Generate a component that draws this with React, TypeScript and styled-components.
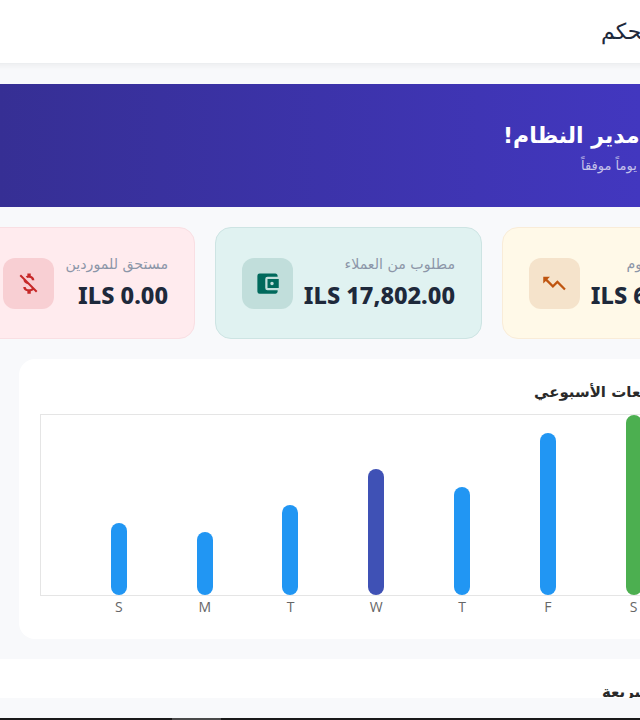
import React from 'react';
import styled, { createGlobalStyle } from 'styled-components';
import { MdAccountBalanceWallet, MdMoneyOff, MdTrendingUp } from 'react-icons/md';

const GlobalStyle = createGlobalStyle`
    html, body {
        margin: 0;
        padding: 0;
        overflow: hidden;
        background: #f8f9fb;
    }
    body {
        font-family: "DejaVu Sans", "Noto Sans", sans-serif;
    }
`;

const Viewport = styled.div`
    width: 640px;
    height: 720px;
    overflow: hidden;
    background: #f8f9fb;
`;

// the page is wider than the window, it runs off on both sides
const Page = styled.div`
    width: 1100px;
    margin-left: -72px;
    display: flex;
    flex-direction: column;
`;

const TopBar = styled.header`
    height: 64px;
    box-sizing: border-box;
    background: #fff;
    border-bottom: 1px solid #eceef0;
    box-shadow: 0 2px 6px rgba(0, 0, 0, 0.05);
    display: flex;
    align-items: center;
    padding-left: 673px;
`;

const PageTitle = styled.h1`
    margin: 0;
    font-size: 22px;
    font-weight: 500;
    color: #1e293b;
    white-space: nowrap;
`;

const Banner = styled.section`
    height: 123px;
    box-sizing: border-box;
    padding-top: 4px;
    margin-top: 20px;
    background: linear-gradient(90deg, #362f94 72px, #4237bf 712px);
    display: flex;
    flex-direction: column;
    justify-content: center;
    align-items: flex-start;
    gap: 10px;
`;

const BannerTitle = styled.h2`
    margin: 0 0 0 575px;
    font-size: 22px;
    font-weight: 700;
    color: #fff;
    white-space: nowrap;
`;

const BannerText = styled.p`
    margin: 0 0 0 653px;
    font-size: 13px;
    color: rgba(255, 255, 255, 0.7);
    white-space: nowrap;
`;

const Cards = styled.div`
    display: grid;
    grid-template-columns: repeat(3, 267px);
    column-gap: 20px;
    margin-top: 20px;
`;

const Card = styled.div<{ $bg: string; $line: string }>`
    height: 112px;
    box-sizing: border-box;
    border-radius: 16px;
    background: ${p => p.$bg};
    border: 1px solid ${p => p.$line};
    padding: 0 26px;
    display: flex;
    align-items: center;
    gap: 11px;
`;

const CardText = styled.div`
    display: flex;
    flex-direction: column;
    align-items: flex-start;
    gap: 7px;
    padding-bottom: 2px;
`;

const Label = styled.div`
    font-size: 14.2px;
    line-height: 18px;
    color: #8c96a8;
    white-space: nowrap;
`;

const Amount = styled.div`
    font-family: "Noto Sans", sans-serif;
    font-size: 23.5px;
    font-weight: 800;
    line-height: 30px;
    color: #1e293b;
    white-space: nowrap;
`;

const Tile = styled.div<{ $bg: string; $fg: string }>`
    width: 51px;
    height: 51px;
    flex: none;
    border-radius: 12px;
    background: ${p => p.$bg};
    color: ${p => p.$fg};
    display: flex;
    align-items: center;
    justify-content: center;
`;

const FlippedIcon = styled(MdTrendingUp)`
    transform: scaleX(-1);
`;

const ChartCard = styled.section`
    margin: 20px 0 0 91px;
    height: 280px;
    box-sizing: border-box;
    border-radius: 16px 0 0 16px;
    background: #fff;
    padding: 21px 0 0 21px;
    display: flex;
    flex-direction: column;
    align-items: flex-start;
`;

const ChartTitle = styled.h3`
    margin: 3px 0 0 494px;
    height: 31px;
    font-size: 15px;
    font-weight: 600;
    color: #2a2a2a;
    white-space: nowrap;
`;

const Plot = styled.div`
    height: 182px;
    width: 100%;
    box-sizing: border-box;
    border: 1px solid #e5e5e5;
    border-right: none;
    padding-left: 35px;
    display: flex;
    align-items: flex-end;
`;

const BarSlot = styled.div`
    width: 85.8px;
    flex: none;
    display: flex;
    justify-content: center;
`;

const Bar = styled.div<{ $color: string; $height: number }>`
    width: 16px;
    height: ${p => p.$height}px;
    border-radius: 8px;
    background: ${p => p.$color};
`;

const AxisRow = styled.div`
    padding-left: 36px;
    display: flex;
`;

const AxisLabel = styled.div`
    width: 85.8px;
    flex: none;
    text-align: center;
    font-family: "Open Sans", sans-serif;
    font-size: 14px;
    font-weight: 400;
    line-height: 22px;
    color: #666;
`;

const ActionsPanel = styled.section`
    margin-top: 20px;
    height: 39px;
    overflow: hidden;
    background: #fff;
    padding: 22px 0 0 674px;
    box-sizing: border-box;
    display: flex;
    align-items: flex-start;
`;

const ActionsTitle = styled.h3`
    margin: 0;
    font-size: 15px;
    font-weight: 600;
    line-height: 22px;
    color: #2a2a2a;
    white-space: nowrap;
`;

const ScrollTrack = styled.div`
    margin-top: 20px;
    height: 2px;
    padding-left: 244px;
    background: #1a1a1a;
`;

const ScrollThumb = styled.div`
    width: 49px;
    height: 2px;
    background: #4a4a4a;
`;

const days = [
    { name: 'S', value: 72, color: '#2196f3' },
    { name: 'M', value: 63, color: '#2196f3' },
    { name: 'T', value: 90, color: '#2196f3' },
    { name: 'W', value: 126, color: '#3f51b5' },
    { name: 'T', value: 108, color: '#2196f3' },
    { name: 'F', value: 162, color: '#2196f3' },
    { name: 'S', value: 180, color: '#4caf50' },
];

const App = () => (
    <Viewport>
        <GlobalStyle />
        <Page>
            <TopBar>
                <PageTitle dir="rtl">لوحة التحكم</PageTitle>
            </TopBar>
            <Banner>
                <BannerTitle dir="rtl">مرحباً، مدير النظام!</BannerTitle>
                <BannerText dir="rtl">نتمنى لك يوماً موفقاً</BannerText>
            </Banner>
            <Cards>
                <Card $bg="#ffebee" $line="#f9dfe3" dir="rtl">
                    <CardText>
                        <Label>مستحق للموردين</Label>
                        <Amount dir="ltr">ILS 0.00</Amount>
                    </CardText>
                    <Tile $bg="#f8cfd3" $fg="#c62828"><MdMoneyOff size={27} /></Tile>
                </Card>
                <Card $bg="#e0f2f1" $line="#cde4e3" dir="rtl">
                    <CardText>
                        <Label>مطلوب من العملاء</Label>
                        <Amount dir="ltr">ILS 17,802.00</Amount>
                    </CardText>
                    <Tile $bg="#c1dedb" $fg="#00695c"><MdAccountBalanceWallet size={27} /></Tile>
                </Card>
                <Card $bg="#fff9e8" $line="#f9ecd8" dir="rtl">
                    <CardText>
                        <Label>مصروفات هذا اليوم</Label>
                        <Amount dir="ltr">ILS 62,480.00</Amount>
                    </CardText>
                    <Tile $bg="#f5e3cb" $fg="#bf5510"><FlippedIcon size={27} /></Tile>
                </Card>
            </Cards>
            <ChartCard>
                <ChartTitle dir="rtl">مخطط المبيعات الأسبوعي</ChartTitle>
                <Plot>
                    {days.map((day, i) => (
                        <BarSlot key={i}>
                            <Bar $color={day.color} $height={day.value} />
                        </BarSlot>
                    ))}
                </Plot>
                <AxisRow>
                    {days.map((day, i) => (
                        <AxisLabel key={i}>{day.name}</AxisLabel>
                    ))}
                </AxisRow>
            </ChartCard>
            <ActionsPanel>
                <ActionsTitle dir="rtl">إجراءات سريعة</ActionsTitle>
            </ActionsPanel>
            <ScrollTrack>
                <ScrollThumb />
            </ScrollTrack>
        </Page>
    </Viewport>
);

export default App;
